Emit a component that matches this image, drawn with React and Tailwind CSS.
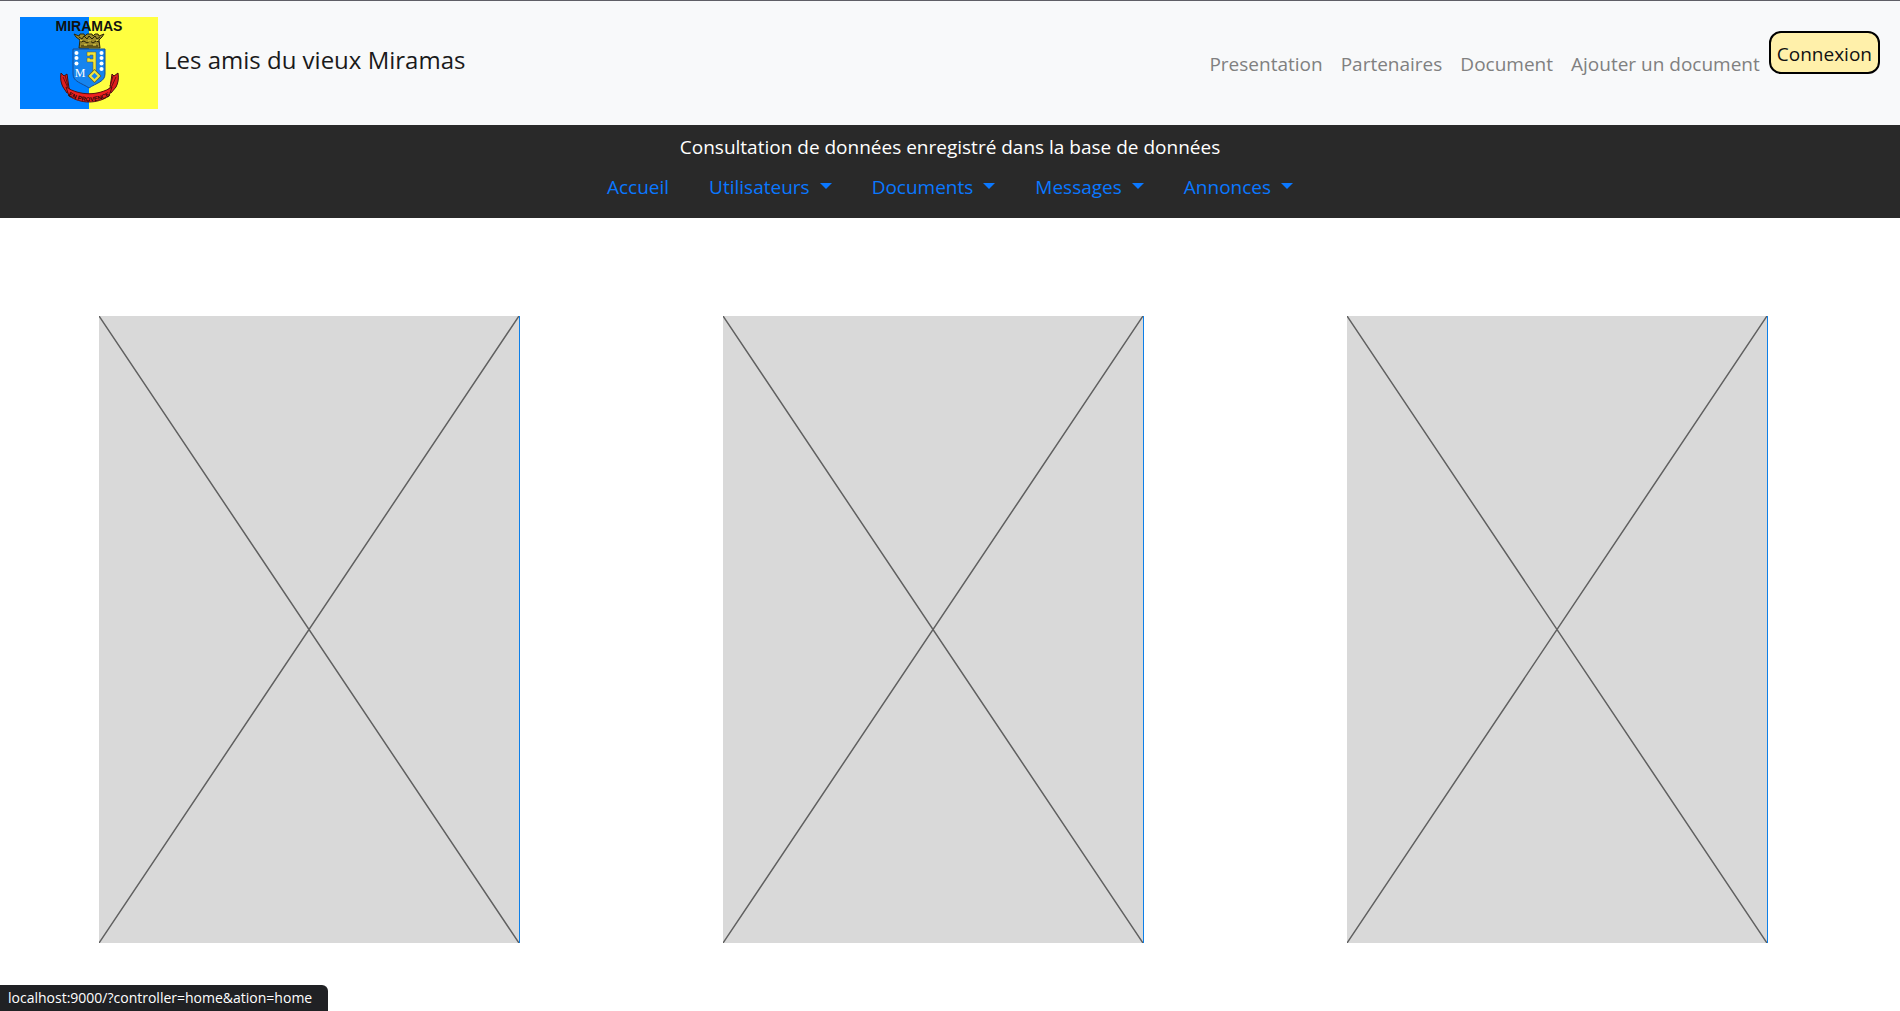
import React from "react";

const headerLinks = ["Presentation", "Partenaires", "Document", "Ajouter un document"];
const menus = ["Utilisateurs", "Documents", "Messages", "Annonces"];

function Logo() {
  return (
    <svg viewBox="0 0 138 92" className="h-[92px] w-[138px]" role="img" aria-label="Miramas">
      <rect width="69" height="92" fill="#0080ff" />
      <rect x="69" width="69" height="92" fill="#ffff40" />
      <text x="69" y="14" textAnchor="middle" fontFamily="'Liberation Sans', Arial, sans-serif" fontWeight="700" fontSize="14" fill="#111">MIRAMAS</text>
      <path d="M54 17l5 2 1-2h4l1 2 2-2h5l1 2 2-2h3l1 2 5-2-2 3-3 3 1 8H59l1-8-4-3z" fill="#9c8a2c" stroke="#2b2608" strokeWidth="1" />
      <path d="M59 20l3 2 2-3 3 3 2-3 3 3 3-3 2 3 3-2M61 25l3-1 3 2 3-2 3 2 3-2 3 1M61 29h17" fill="none" stroke="#222006" strokeWidth="1" />
      <path d="M60 23l2 1M68 24h3M76 24l2-1M64 28h3M73 28h3" stroke="#f0df4a" strokeWidth="1" />
      <path d="M53 32h32v25c0 8-9 9-16 14-7-5-16-6-16-14z" fill="#1684ee" stroke="#174b91" strokeWidth="1" />
      <g fill="#fff">
        <circle cx="56.500" cy="36" r="2" /><circle cx="56.500" cy="41" r="2" /><circle cx="56.500" cy="46.500" r="2" />
        <circle cx="81.500" cy="36" r="2" /><circle cx="81.500" cy="41" r="2" /><circle cx="81.500" cy="46.500" r="2" /><circle cx="81.500" cy="52" r="2" />
      </g>
      <path d="M67 35h9v20h-3V45h-6v-4h3v1h3v-4h-3v1h-3z" fill="#f0e43c" stroke="#645e20" strokeWidth=".5" />
      <path d="M74.500 54.500l4.500 4.500-4.500 4.500L70 59z" fill="#1684ee" stroke="#645e20" strokeWidth="3.500" />
      <path d="M74.500 54.500l4.500 4.500-4.500 4.500L70 59z" fill="#1684ee" stroke="#f0e43c" strokeWidth="2" />
      <text x="60" y="60" textAnchor="middle" fontFamily="'Liberation Serif', serif" fontSize="12" fill="#fff">M</text>
      <path d="M41 56l3 3 3-2 2 14 3 3-5 2-4-6c-2-4-3-8-2-14zM98 56l-4 3-2-2-2 14-4 3 5 2 5-6c2-4 3-8 2-14z" fill="#df1d1d" stroke="#451010" strokeWidth="1" />
      <path d="M43 60l5 11M45 58l3 11M96 60l-5 11M93 59l-3 10" stroke="#681010" strokeWidth="1" />
      <path d="M46 70c14 9 32 9 46 0l-3 9c-12 8-28 8-40 0z" fill="#ed2020" stroke="#5a1010" strokeWidth="1" />
      <path id="motto" d="M49 79c13 7 28 7 40 0" fill="none" />
      <text fontFamily="'Liberation Sans', Arial, sans-serif" fontWeight="700" fontSize="6" fill="#240808"><textPath href="#motto" startOffset="50%" textAnchor="middle">EN PROVENCE</textPath></text>
    </svg>
  );
}

function Placeholder() {
  return (
    <a href="#" aria-label="Image" className="block aspect-[421/627] border-r border-[#0d7fe8] bg-[#d9d9d9]">
      <svg viewBox="0 0 420 627" preserveAspectRatio="none" className="h-full w-full">
        <path d="M0 0l420 627M420 0L0 627" stroke="#606060" strokeWidth="1.500" fill="none" />
      </svg>
    </a>
  );
}

export default function App() {
  return (
    <div className="min-h-screen bg-white font-['Open_Sans','Noto_Sans',sans-serif] text-[19px] leading-[30px]">
      <header className="flex items-start justify-between border-t border-[#5f5f66] bg-[#f8f9fa] px-5 pt-4 pb-4">
        <a href="#" className="flex items-center gap-[6px] text-[24px] text-[#1a1a1a]">
          <Logo />
          <span className="pb-[6px]">Les amis du vieux Miramas</span>
        </a>
        <nav className="flex items-start pt-[14px]">
          {headerLinks.map((label) => (
            <a key={label} href="#" className="mt-[18px] px-[9px] text-[#808080]">{label}</a>
          ))}
          <button type="button" className="rounded-xl border-2 border-black bg-[#fff0aa] px-[6px] pt-[6px] pb-[3px] text-[#111]">Connexion</button>
        </nav>
      </header>
      <section className="bg-[#292929] pt-[7px] pb-4 text-center">
        <p className="text-white">Consultation de données enregistré dans la base de données</p>
        <nav className="mt-[10px] flex justify-center text-[#0a78ff]">
          <a href="#" className="px-5">Accueil</a>
          {menus.map((label) => (
            <button key={label} type="button" className="flex items-center gap-[10px] px-5">
              {label}
              <svg viewBox="0 0 12 6" className="mb-[3px] h-[6px] w-3" aria-hidden="true"><path d="M0 0h12L6 6z" fill="currentColor" /></svg>
            </button>
          ))}
        </nav>
      </section>
      <main className="grid grid-cols-3 gap-[203px] pt-[98px] pr-[132px] pb-[68px] pl-[99px]">
        <Placeholder />
        <Placeholder />
        <Placeholder />
      </main>
      <div className="fixed bottom-0 left-0 rounded-tr-md bg-[#202124] pr-4 pl-2 text-[14px] leading-[26px] text-white">
        localhost:9000/?controller=home&amp;ation=home
      </div>
    </div>
  );
}
